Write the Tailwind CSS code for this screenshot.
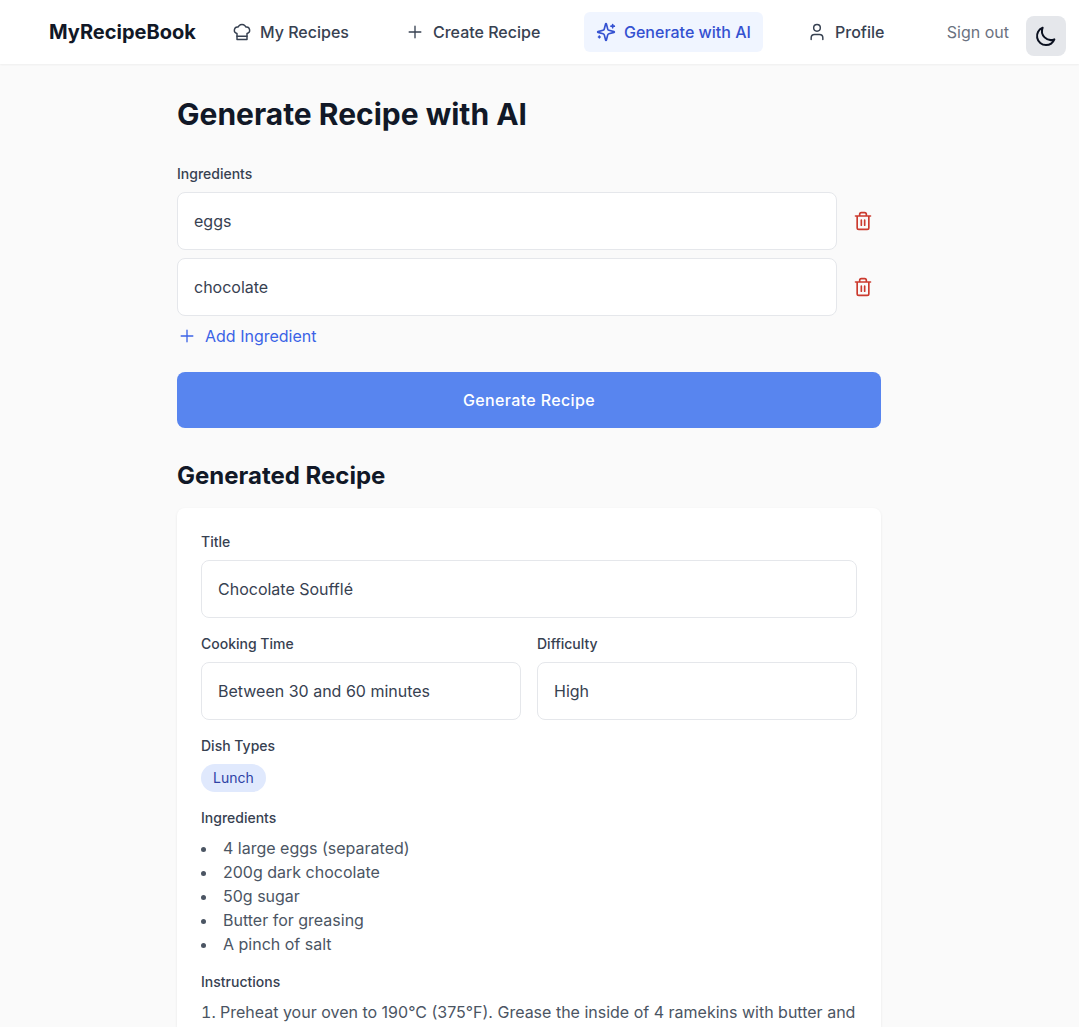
<!DOCTYPE html>
<html lang="en">
<head>
<meta charset="utf-8">
<title>MyRecipeBook</title>
<script src="https://cdn.jsdelivr.net/npm/@tailwindcss/browser@4"></script>
</head>
<body class="h-[1027px] overflow-hidden bg-[#fafafa] font-['Inter',sans-serif] text-base text-[#374151] antialiased">
<header class="h-16 bg-white shadow-xs">
  <div class="flex h-16 items-center pl-[49px] pr-[13px]">
    <a class="w-[147px] whitespace-nowrap text-xl font-bold text-[#111827]">MyRecipeBook</a>
    <nav class="ml-6 flex gap-8 whitespace-nowrap font-medium">
      <a class="flex w-[141px] items-center gap-2 rounded-md px-3 py-2">
        <svg class="size-5 shrink-0" viewBox="0 0 24 24" fill="none" stroke="currentColor" stroke-width="1.75" stroke-linecap="round" stroke-linejoin="round"><path d="M6 13.87A4 4 0 0 1 7.41 6a5.11 5.11 0 0 1 1.05-1.54 5 5 0 0 1 7.08 0A5.11 5.11 0 0 1 16.59 6 4 4 0 0 1 18 13.87V21H6Z"/><path d="M6 17h12"/></svg>
        My Recipes</a>
      <a class="flex w-[159px] items-center gap-2 rounded-md px-3 py-2">
        <svg class="size-5 shrink-0" viewBox="0 0 24 24" fill="none" stroke="currentColor" stroke-width="1.6" stroke-linecap="round" stroke-linejoin="round"><path d="M5 12h14M12 5v14"/></svg>
        Create Recipe</a>
      <a class="flex w-[179px] items-center gap-2 rounded-md bg-[#f0f5ff] px-3 py-2 text-[#3451d1]">
        <svg class="size-5 shrink-0" viewBox="0 0 24 24" fill="none" stroke="currentColor" stroke-width="2" stroke-linecap="round" stroke-linejoin="round"><path d="M9.937 15.5A2 2 0 0 0 8.5 14.063l-6.135-1.582a.5.5 0 0 1 0-.962L8.5 9.936A2 2 0 0 0 9.937 8.5l1.582-6.135a.5.5 0 0 1 .963 0L14.063 8.5A2 2 0 0 0 15.5 9.937l6.135 1.581a.5.5 0 0 1 0 .964L15.5 14.063a2 2 0 0 0-1.437 1.437l-1.582 6.135a.5.5 0 0 1-.963 0z"/><path d="M20 3v4M22 5h-4M4 17v2M5 18H3"/></svg>
        Generate with AI</a>
      <a class="flex w-[101px] items-center gap-2 rounded-md px-3 py-2">
        <svg class="size-5 shrink-0" viewBox="0 0 24 24" fill="none" stroke="currentColor" stroke-width="1.75" stroke-linecap="round" stroke-linejoin="round"><path d="M19 21v-2a4 4 0 0 0-4-4H9a4 4 0 0 0-4 4v2"/><circle cx="12" cy="7" r="4"/></svg>
        Profile</a>
    </nav>
    <a class="ml-auto whitespace-nowrap text-[#6b7280]">Sign out</a>
    <button class="ml-[17px] mt-2 rounded-lg bg-[#e5e7eb] p-2 text-[#0b1120]">
      <svg class="size-6" viewBox="0 0 24 24" fill="none" stroke="currentColor" stroke-width="2" stroke-linecap="round" stroke-linejoin="round"><path d="M20.354 15.354A9 9 0 0 1 8.646 3.646 9.003 9.003 0 0 0 12 21a9.003 9.003 0 0 0 8.354-5.646z"/></svg>
    </button>
  </div>
</header>
<main class="ml-[177px] w-[704px] pt-8">
  <h1 class="text-3xl font-bold text-[#111827]">Generate Recipe with AI</h1>
  <label class="mt-8 block text-sm font-medium">Ingredients</label>
  <div class="mt-2 flex flex-col gap-2">
    <div class="flex items-center gap-2">
      <div class="flex h-[58px] flex-1 items-center rounded-lg border border-[#e5e7eb] bg-white px-4">eggs</div>
      <button class="p-2 text-[#cb3a2e]"><svg class="size-5" viewBox="0 0 24 24" fill="none" stroke="currentColor" stroke-width="2" stroke-linecap="round" stroke-linejoin="round"><path d="M3 6h18M19 6v14c0 1-1 2-2 2H7c-1 0-2-1-2-2V6M8 6V4c0-1 1-2 2-2h4c1 0 2 1 2 2v2M10 11v6M14 11v6"/></svg></button>
    </div>
    <div class="flex items-center gap-2">
      <div class="flex h-[58px] flex-1 items-center rounded-lg border border-[#e5e7eb] bg-white px-4">chocolate</div>
      <button class="p-2 text-[#cb3a2e]"><svg class="size-5" viewBox="0 0 24 24" fill="none" stroke="currentColor" stroke-width="2" stroke-linecap="round" stroke-linejoin="round"><path d="M3 6h18M19 6v14c0 1-1 2-2 2H7c-1 0-2-1-2-2V6M8 6V4c0-1 1-2 2-2h4c1 0 2 1 2 2v2M10 11v6M14 11v6"/></svg></button>
    </div>
    <button class="flex items-center gap-2 text-[#3b63e6]">
      <svg class="size-5" viewBox="0 0 24 24" fill="none" stroke="currentColor" stroke-width="1.6" stroke-linecap="round" stroke-linejoin="round"><path d="M5 12h14M12 5v14"/></svg>
      Add Ingredient</button>
  </div>
  <button class="mt-6 h-14 w-full rounded-lg bg-[#5885ef] font-medium tracking-[0.35px] text-white">Generate Recipe</button>
  <h2 class="mt-8 text-2xl font-bold text-[#111827]">Generated Recipe</h2>
  <section class="mt-4 h-[519px] overflow-hidden rounded-t-lg bg-white p-6 pb-0 shadow-[0_1px_3px_rgba(0,0,0,0.08)]">
    <div class="text-sm font-medium">Title</div>
    <div class="mt-2 flex h-[58px] items-center rounded-lg border border-[#e5e7eb] px-4">Chocolate Soufflé</div>
    <div class="mt-4 grid grid-cols-2 gap-4">
      <div>
        <div class="text-sm font-medium">Cooking Time</div>
        <div class="mt-2 flex h-[58px] items-center rounded-lg border border-[#e5e7eb] px-4">Between 30 and 60 minutes</div>
      </div>
      <div>
        <div class="text-sm font-medium">Difficulty</div>
        <div class="mt-2 flex h-[58px] items-center rounded-lg border border-[#e5e7eb] px-4">High</div>
      </div>
    </div>
    <div class="mt-4 text-sm font-medium">Dish Types</div>
    <div class="mt-2 flex"><span class="rounded-full bg-[#e0e9fd] px-3 py-1 text-sm text-[#2e42a5]">Lunch</span></div>
    <div class="mt-4 text-sm font-medium">Ingredients</div>
    <ul class="mt-2 list-inside list-disc text-[#4b5563]">
      <li>4 large eggs (separated)</li>
      <li>200g dark chocolate</li>
      <li>50g sugar</li>
      <li>Butter for greasing</li>
      <li>A pinch of salt</li>
    </ul>
    <div class="mt-4 text-sm font-medium">Instructions</div>
    <ol class="mt-2 list-inside list-decimal text-[#4b5563]">
      <li>Preheat your oven to 190°C (375°F). Grease the inside of 4 ramekins with butter and</li>
    </ol>
  </section>
</main>
</body>
</html>
